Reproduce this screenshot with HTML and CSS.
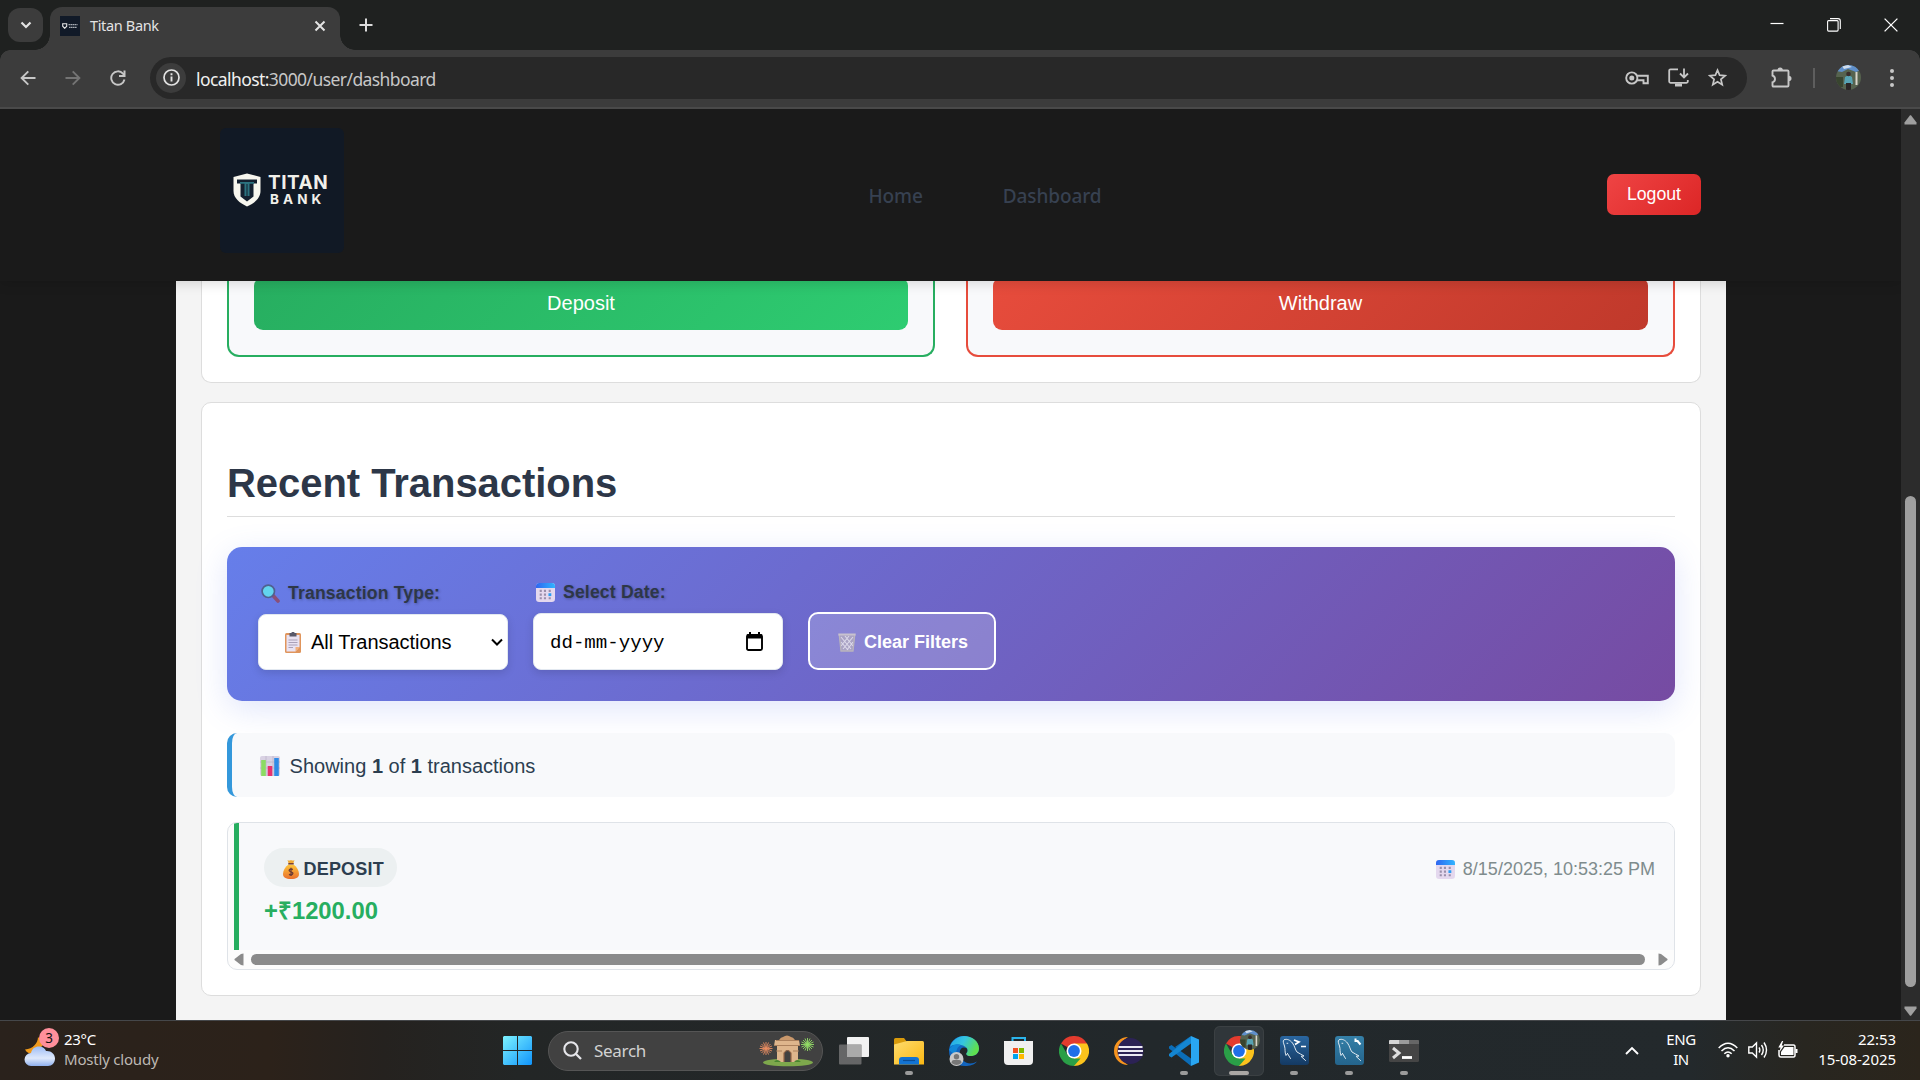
FILE: index.html
```html
<!DOCTYPE html>
<html lang="en">
<head>
<meta charset="utf-8">
<title>Titan Bank</title>
<link rel="stylesheet" href="styles.css">
</head>
<body>
<svg class="defs" width="0" height="0">
  <defs>
    <linearGradient id="calTop" x1="0" x2="1"><stop offset="0" stop-color="#2f66f0"/><stop offset="1" stop-color="#30b4ff"/></linearGradient>
    <linearGradient id="win" x1="0" y1="0" x2="1" y2="1"><stop offset="0" stop-color="#7df3ff"/><stop offset="1" stop-color="#1094fb"/></linearGradient>
    <linearGradient id="folder" x1="0" y1="0" x2="1" y2="1"><stop offset="0" stop-color="#ffdc6e"/><stop offset="1" stop-color="#fbb813"/></linearGradient>
    <linearGradient id="cloud" x1="0" y1="0" x2="0" y2="1"><stop offset="0" stop-color="#9dbcf5"/><stop offset=".6" stop-color="#dfe9fb"/><stop offset="1" stop-color="#8fb0ee"/></linearGradient>
    <linearGradient id="edgeA" x1="0" y1="0" x2="1" y2=".4"><stop offset="0" stop-color="#1fa3ea"/><stop offset=".5" stop-color="#35c5e0"/><stop offset="1" stop-color="#5fe04f"/></linearGradient>
    <linearGradient id="bag" x1="0" y1="0" x2="0" y2="1"><stop offset="0" stop-color="#ffc63a"/><stop offset="1" stop-color="#e8702e"/></linearGradient>
    <linearGradient id="sqlA" x1="0" y1="0" x2="0" y2="1"><stop offset="0" stop-color="#2a66a0"/><stop offset="1" stop-color="#143a63"/></linearGradient>
    <linearGradient id="sqlB" x1="0" y1="0" x2="0" y2="1"><stop offset="0" stop-color="#3580a8"/><stop offset="1" stop-color="#24648c"/></linearGradient>
    <symbol id="calendar" viewBox="0 0 18 18">
      <rect width="18" height="18" rx="3" fill="#e4d8ee"/><path d="M0 4.800V3a3 3 0 0 1 3-3h12a3 3 0 0 1 3 3v1.800z" fill="url(#calTop)"/>
      <g fill="#9a8fab"><path d="M3.500 6.500h2v2h-2zM7.500 6.500h2v2h-2zM12 6.500h2v2h-2zM3.500 10h2v2h-2zM7.500 10h2v2h-2zM3.500 13.500h2v2h-2zM7.500 13.500h2v2h-2zM12 13.500h2v2h-2z"/></g><path d="M11.800 9.700h2.700v2.700h-2.700z" fill="#2a9df4"/>
    </symbol>
    <symbol id="chrome" viewBox="0 0 30 30">
      <path d="M15 15 2 7.500A15 15 0 0 1 28 7.500z" fill="#e33b2e"/>
      <path d="M15 15V7.500h13A15 15 0 0 1 15 30z" fill="#fcc31c"/>
      <path d="M2 7.500 8.500 18.800 15 22.500h6.500L15 30A15 15 0 0 1 2 7.500z" fill="#2a9f47"/>
      <circle cx="15" cy="15" r="7.500" fill="#fff"/><circle cx="15" cy="15" r="5.900" fill="#1f6fe8"/>
    </symbol>
    <symbol id="avatar" viewBox="0 0 25 25">
      <clipPath id="round"><circle cx="12.500" cy="12.500" r="12.500"/></clipPath>
      <g clip-path="url(#round)"><path d="M0 0h25v25H0z" fill="#56634f"/><path d="M0 0h25v5l-5 2-8-3-6 3-6-1z" fill="#5f8fca"/><path d="M6 1l6-1 4 2-8 2z" fill="#cfdcec"/><path d="M19.500 7h2v13h-2z" fill="#d9d6cc"/><path d="M0 12h7v10H0z" fill="#38442f"/><path d="M9 12q3.500-3 7 0l1 7H8z" fill="#57a3b3"/><circle cx="12.500" cy="9" r="2.300" fill="#3a2d2b"/><path d="M10 18h5v7h-5z" fill="#2b2626"/></g>
    </symbol>
    <symbol id="dolphin" viewBox="0 0 28 28">
      <path d="M7.500 17.500 6 19.500C4.500 16 5.500 13 4.500 10S2.500 5 4 3.800C7 2.500 10 4 12.500 7c2.500 3.500 2.500 6.500 4.500 9 2 1.800 5 2.200 7 4l-3 .3 4.500 4.200M7 7.300h.8M7.500 17.500l3 5" fill="none" stroke="#dfe9f1" stroke-width="1" stroke-linecap="round" stroke-linejoin="round"/>
    </symbol>
  </defs>
</svg>

<div class="tabstrip">
  <div class="tab-search"><svg width="12" height="8" viewBox="0 0 12 8"><path d="M1.500 1.500 6 6l4.500-4.500" fill="none" stroke="#e3e3e3" stroke-width="2.200"/></svg></div>
  <div class="tab">
    <div class="favicon"><svg width="16" height="6" viewBox="0 0 16 6"><path d="M.7.700h4v2.500L2.700 5.300.7 3.200z" fill="none" stroke="#e8e8e8" stroke-width="1.100"/><path d="M6.500 1.700h9M7 4.300h8" stroke="#a8adb4" stroke-width="1.300" stroke-dasharray="1.600 .4"/></svg></div>
    <span class="tab-title">Titan Bank</span>
    <svg class="tab-close" width="12" height="12" viewBox="0 0 12 12"><path d="m1.500 1.500 9 9m0-9-9 9" stroke="#e3e3e3" stroke-width="2"/></svg>
  </div>
  <svg class="new-tab" width="14" height="14" viewBox="0 0 14 14"><path d="M7 .5v13M.5 7h13" stroke="#dcdcdc" stroke-width="2"/></svg>
  <div class="window-buttons">
    <svg width="14" height="14" viewBox="0 0 14 14"><path d="M.5 5.500h13" stroke="#fff" stroke-width="1.200"/></svg>
    <svg width="14" height="14" viewBox="0 0 14 14"><rect x=".6" y="2.600" width="10.500" height="10.500" rx="1" fill="none" stroke="#fff" stroke-width="1.100"/><path d="M3 .6h8a2.300 2.300 0 0 1 2.300 2.300V11" fill="none" stroke="#fff" stroke-width="1.100"/></svg>
    <svg width="14" height="14" viewBox="0 0 14 14"><path d="m.6.600 12.800 12.800M13.400.600.6 13.400" stroke="#fff" stroke-width="1.300"/></svg>
  </div>
</div>

<div class="toolbar">
  <div class="nav-icons">
    <svg width="16" height="16" viewBox="0 0 16 16"><path d="M15.500 8H2M8.300 1.300 1.600 8l6.700 6.700" fill="none" stroke="#c7c7c7" stroke-width="1.900"/></svg>
    <svg width="16" height="16" viewBox="0 0 16 16"><path d="M.5 8H14M7.700 1.300 14.400 8l-6.700 6.700" fill="none" stroke="#747474" stroke-width="1.900"/></svg>
    <svg width="16" height="16" viewBox="0 0 16 16"><path d="M14.500 9.500A6.700 6.700 0 1 1 13 3.600l1 1.200" fill="none" stroke="#c7c7c7" stroke-width="1.900"/><path d="M15.500.500V7H9V5.100h4.500V.500z" fill="#c7c7c7"/></svg>
  </div>
  <div class="omnibox">
    <div class="site-info"><svg width="17" height="17" viewBox="0 0 17 17"><circle cx="8.500" cy="8.500" r="7.500" fill="none" stroke="#e3e3e3" stroke-width="1.700"/><path d="M8.500 7.500v5M8.500 4.300v1.900" stroke="#e3e3e3" stroke-width="1.900"/></svg></div>
    <span class="url"><b>localhost:</b>3000/user/dashboard</span>
    <div class="omni-icons">
      <svg width="24" height="14" viewBox="0 0 24 14"><circle cx="6.800" cy="7" r="5.600" fill="none" stroke="#c7c7c7" stroke-width="1.900"/><circle cx="6.800" cy="7" r="2.500" fill="#c7c7c7"/><path d="M12 4.800h10.800v7.500h-4.300V9.300H12" fill="none" stroke="#c7c7c7" stroke-width="1.900"/></svg>
      <svg width="21" height="19" viewBox="0 0 21 19"><path d="M10 1.300H2.500Q1.200 1.300 1.200 2.600v11q0 1.200 1.300 1.200h16q1.300 0 1.300-1.200V12" fill="none" stroke="#c7c7c7" stroke-width="1.800"/><path d="M7 15.500h7v3H7z" fill="#c7c7c7"/><path d="M16 .5v8.500M12 5.500l4 4 4-4" fill="none" stroke="#c7c7c7" stroke-width="1.800"/></svg>
      <svg width="19" height="19" viewBox="0 0 19 19"><path d="m9.500 2.200 2.100 5 5.500.5-4.200 3.600 1.300 5.300-4.700-2.900-4.700 2.900 1.300-5.300L1.900 7.700l5.500-.5z" fill="none" stroke="#c7c7c7" stroke-width="1.700"/></svg>
    </div>
  </div>
  <div class="tool-icons">
    <svg width="21" height="21" viewBox="0 0 21 21"><path d="M2.500 3.500h14q1 0 1 1v14q0 1-1 1h-14q-1 0-1-1V15.300q2.500-.8 2.500-3.300T1.500 8.500V4.500q0-1 1-1z" fill="none" stroke="#c7c7c7" stroke-width="1.900"/><path d="M6.500 3.500a2.700 3 0 0 1 5.400 0zM17.500 8.700a3 2.700 0 0 1 0 5.400z" fill="#c7c7c7"/></svg>
    <i class="divider"></i>
    <svg width="25" height="25"><use href="#avatar"/></svg>
    <svg width="4" height="18" viewBox="0 0 4 18"><g fill="#c7c7c7"><circle cx="2" cy="2" r="2"/><circle cx="2" cy="9" r="2"/><circle cx="2" cy="16" r="2"/></g></svg>
  </div>
</div>

<div class="viewport">
  <div class="page">
    <header class="site-header">
      <div class="logo">
        <svg width="28" height="34" viewBox="0 0 28 34"><path d="M14 .5 27.500 4v14c0 7-6 12-13.500 15.500C6.500 30 .5 25 .5 18V4z" fill="#f7f6ee"/><path d="M4 6.500h20v4h-3.500v13L14 28.500 7.500 23.500v-13H4z" fill="#142030"/><path d="M7 9h14v1.800h-4.500V23h-2V11h-1v12h-2V10.800H7z" fill="#2b7280"/></svg>
        <div class="logo-text"><div class="titan">TITAN</div><div class="bank">BANK</div></div>
      </div>
      <nav class="site-nav"><a>Home</a><a>Dashboard</a></nav>
      <button class="logout">Logout</button>
    </header>
    <main class="dashboard">
      <section class="card actions">
        <div class="action deposit"><button>Deposit</button></div>
        <div class="action withdraw"><button>Withdraw</button></div>
      </section>
      <section class="card transactions">
        <h2>Recent Transactions</h2>
        <div class="filters">
          <div class="field type">
            <div class="label"><svg width="19" height="19" viewBox="0 0 19 19"><path d="m12 11.500 5 5.500" stroke="#8a4f78" stroke-width="3.600" stroke-linecap="round"/><circle cx="7.300" cy="7.300" r="6.200" fill="#62d4ee" stroke="#50618f" stroke-width="1.700"/></svg>Transaction Type:</div>
            <div class="control select"><svg width="16" height="21" viewBox="0 0 16 21"><rect y="1" width="16" height="20" rx="1.500" fill="#e0955c"/><path d="M1.500 3h13v12l-4 4.500h-9z" fill="#e9e2f2"/><path d="M14.500 15 10.500 19.500V15z" fill="#f3b07c"/><path d="M4.500 1h2a1.500 1.500 0 0 1 3 0h2v3.500h-7z" fill="#59596a"/><path d="M3.500 8h9M3.500 10.500h9M3.500 13h9M3.500 15.500H8" stroke="#aaa0b8"/></svg><span>All Transactions</span><svg class="caret" width="12" height="8" viewBox="0 0 12 8"><path d="M1 1.500 6 6.500l5-5" fill="none" stroke="#000" stroke-width="2"/></svg></div>
          </div>
          <div class="field">
            <div class="label"><svg width="19" height="19"><use href="#calendar"/></svg>Select Date:</div>
            <div class="control date"><span>dd-mm-yyyy</span><svg width="17" height="19" viewBox="0 0 17 19"><rect x="1" y="3" width="15" height="15" rx="1.500" fill="none" stroke="#000" stroke-width="1.900"/><path d="M1 2.300h15V6.500H1zM3 0h2v3H3zM12 0h2v3h-2z"/></svg></div>
          </div>
          <button class="clear"><svg width="18" height="19" viewBox="0 0 18 19"><path d="M1 2h16l-2 16H3z" fill="#a9a2c4"/><path d="m3 4 10 12M7 3l8 10M3 9l7 8M15 4 5 16M11 3 3 13M15 9l-6 8" stroke="#dcd9ea" stroke-width="1.100"/><path d="M1.300 2 3 18h12l1.700-16" fill="none" stroke="#b9b4bd" stroke-width="1.300"/><path d="M.3 1.500h17.400" stroke="#c8c2cf" stroke-width="2"/></svg>Clear Filters</button>
        </div>
        <div class="summary"><svg width="20" height="20" viewBox="0 0 20 20"><rect width="20" height="20" rx="2" fill="#d9d2e3"/><path d="M0 6h20M0 12h20M6 0v20M13 0v20" stroke="#bdb4c9" stroke-width=".8"/><path d="M1.200 4h4.600v16H1.200z" fill="#8cdb63"/><path d="M7.700 10h4.600v10H7.700z" fill="#e8316f"/><path d="M14.200 2h4.600v18h-4.600z" fill="#2f8be6"/></svg><span>Showing <b>1</b> of <b>1</b> transactions</span></div>
        <div class="list">
          <div class="item">
            <div class="item-main">
              <div class="pill"><svg width="16" height="20" viewBox="0 0 16 20"><path d="M5.500 5.500h5C14 8 16 11.500 16 15c0 3.500-2.500 5-8 5s-8-1.500-8-5c0-3.500 2-7 5.500-9.500z" fill="url(#bag)"/><path d="M4.500 1q1.500 1 3.500 0 2 1 3.500 0l-1.200 3.500H5.700z" fill="#f0a934"/><path d="M5.300 4.700h5.400" stroke="#7b4032" stroke-width="1.500"/><path d="M9.800 10.600q-1.800-1.200-3.200 0t1.400 2.200 1.400 2.400-3.400.2M8 8.800v8.200" fill="none" stroke="#6b3b35" stroke-width="1.300"/></svg>DEPOSIT</div>
              <div class="amount">+₹1200.00</div>
            </div>
            <div class="when"><svg width="19" height="19"><use href="#calendar"/></svg>8/15/2025, 10:53:25 PM</div>
          </div>
          <div class="hscroll">
            <svg width="10" height="13" viewBox="0 0 10 13"><path d="M9.500.500v12L7 12 .5 7V6L7 1z" fill="#8b8b8b"/></svg>
            <i class="hthumb"></i>
            <svg width="10" height="13" viewBox="0 0 10 13"><path d="M.5.500v12L3 12 9.500 7V6L3 1z" fill="#8b8b8b"/></svg>
          </div>
        </div>
      </section>
    </main>
  </div>
  <div class="vscroll">
    <svg width="13" height="10" viewBox="0 0 13 10"><path d="M6 .3h1L12.500 7.500V9.500H.5V7.500z" fill="#9f9f9f"/></svg>
    <i class="vthumb"></i>
    <svg width="13" height="10" viewBox="0 0 13 10"><path d="M6 9.700h1L12.500 2.500V.500H.5V2.500z" fill="#9f9f9f"/></svg>
  </div>
</div>

<div class="taskbar">
  <div class="weather">
    <div class="weather-icon"><svg width="34" height="38" viewBox="0 0 34 38"><path d="M14 7c0 6-5 12-13 12.500 2 4 6 5 11 4l8-10z" fill="#f09a1c"/><path d="M7 36a6.500 6.500 0 0 1 0-13c1-5 5-7 9-6.500 3 .3 5 2 6 4.500 5-.5 9 3 9 7.500S28 36 24 36z" fill="url(#cloud)"/></svg><span class="badge">3</span></div>
    <div class="weather-text"><div>23°C</div><div class="dim">Mostly cloudy</div></div>
  </div>
  <div class="apps">
    <svg class="start" width="29" height="29" viewBox="0 0 29 29"><path d="M1 0h13v14H0V1zM15 0h13l1 1v13H15zM0 15h14v14H1l-1-1zM15 15h14v13l-1 1H15z" fill="url(#win)"/></svg>
    <div class="search">
      <svg width="19" height="19" viewBox="0 0 19 19"><circle cx="8" cy="8" r="6.700" fill="none" stroke="#e6e6ea" stroke-width="2.100"/><path d="m13 13 5 5" stroke="#e6e6ea" stroke-width="2.300"/></svg>
      <span>Search</span>
      <svg width="56" height="32" viewBox="0 0 56 32"><ellipse cx="29" cy="27.500" rx="25" ry="3.800" fill="#7ea84c"/><path d="M16 5h24l1 6h-2v16h-7V18q-3.500-6-7 0v9h-7V11h-3z" fill="#deb58c"/><path d="M20 5q2-3 4-3 4-3 8 0 2 0 4 3z" fill="#c9986c"/><path d="M15 10.500h26M17 16h6M34 16h6M17 5.500h23" stroke="#a67a58" stroke-width=".9"/><path d="M25 27v-9q3.500-5 7 0v9z" fill="#414141"/><path d="M25 27v-9q3.500-5 7 0v9" fill="none" stroke="#946547" stroke-width="1.200"/><path d="M15 27q3-4 7 0zM35 27q3-4 7 0z" fill="#48862f"/><g fill="none" stroke-width=".9"><path d="M7 7v13M.5 13.500h13M2.500 9l9 9m0-9-9 9M4.500 7.500l5 12m0-12-5 12M1 11l12 5m0-5L1 16" stroke="#e98d62"/><path d="M48.500 3v13M42 9.500h13M44 5l9 9m0-9-9 9M46 3.500l5 12m0-12-5 12M42.500 7l12 5m0-5-12 5" stroke="#93dc66"/></g></svg>
    </div>
    <div class="slots">
      <div class="slot"><svg width="30" height="30" viewBox="0 0 30 30"><rect x="8" y="1" width="22" height="20" rx="1" fill="#f2f2f2"/><rect y="8.500" width="22.500" height="20" rx="1" fill="#777" fill-opacity=".8"/><path d="M8 8.500h14.500V21H8z" fill="#aaa"/></svg></div>
      <div class="slot run"><svg width="30" height="30" viewBox="0 0 30 30"><path d="M0 3.500Q0 2 1.500 2H10l3 4h15v6H0z" fill="#d99a0b"/><path d="M0 8.500 13 5h15.500Q30 5 30 6.500v22H0z" fill="url(#folder)"/><path d="M5 28.500V24q0-3 3-3h14q3 0 3 3v4.500z" fill="#1374d3"/><path d="M9 24.500h12" stroke="#0b4d95" stroke-width="1.200"/></svg></div>
      <div class="slot"><svg width="30" height="30" viewBox="0 0 30 30"><path d="M0 15C0 6 7 0 15 0s15 6 15 12.500c0 5-4 7.500-8.500 7.500-4 0-5-2-3.500-3.500 1.500-2 .5-5-3-5-5 0-6 8-1 13 4 3.500 9 4 14 1-3 3.500-7 4.500-12 4.500C7 30 0 24 0 15z" fill="#1264bd"/><path d="M1 11C3 4 9 0 15 0c8 0 15 5 15 12.500 0 5-4 7.500-8.500 7.500-4 0-5-2-3.500-3.500 1.500-2 .5-5.500-4-7C9 8 4 8 1 11z" fill="url(#edgeA)"/><path d="M0 14c2-5 8-7 12-5-4 2-6 7-4 12z" fill="#1187d8"/><circle cx="7.500" cy="23" r="7" fill="#c9c9c9"/><circle cx="7.500" cy="20.700" r="2.700" fill="#777"/><path d="M2.500 27q0-3 2.500-3h5q2.500 0 2.500 3-5 4-10 0z" fill="#777"/></svg></div>
      <div class="slot"><svg width="30" height="30" viewBox="0 0 30 30"><path d="M8.500 6V2h12.500v4" fill="none" stroke="#2bb4ec" stroke-width="2"/><path d="M0 5h29v20q0 4-4 4H4q-4 0-4-4z" fill="#f0f0f0"/><path d="M9 12h5v5H9z" fill="#f25022"/><path d="M15 12h5v5h-5z" fill="#7fba00"/><path d="M9 18h5v5H9z" fill="#00a4ef"/><path d="M15 18h5v5h-5z" fill="#ffb900"/></svg></div>
      <div class="slot"><svg width="30" height="30"><use href="#chrome"/></svg></div>
      <div class="slot"><svg width="30" height="30" viewBox="0 0 30 30"><path d="M14 1A14 14 0 0 0 14 29 16 16 0 0 1 14 1z" fill="#f7941e"/><circle cx="16.500" cy="15" r="13" fill="#2c2255"/><path d="M4.500 11h24M4 15h25M4.500 19h24" stroke="#eceaf3" stroke-width="2"/></svg></div>
      <div class="slot run"><svg width="30" height="30" viewBox="0 0 30 30"><path d="M22 0 8 13 2.500 9 0 10.500v2L22 30v-7.500L6 11z" fill="#0b6db8"/><path d="M22 0v7.500L2.500 21.500 0 20v-2z" fill="#1486d2"/><path d="m22 0 8 3.500v23L22 30z" fill="#29a6f2"/></svg></div>
      <div class="slot run active"><svg width="30" height="30"><use href="#chrome"/></svg><svg class="mini" width="20" height="20" viewBox="0 0 25 25"><use href="#avatar" width="25" height="25"/></svg></div>
      <div class="slot run"><svg width="29" height="29" viewBox="0 0 29 29"><rect width="29" height="29" rx="3" fill="url(#sqlA)"/><use href="#dolphin" width="28" height="28"/><path d="m14 4 5 2-4 2.500M21 10.500h5" fill="none" stroke="#fff" stroke-width="1.700"/></svg></div>
      <div class="slot run"><svg width="29" height="29" viewBox="0 0 29 29"><rect width="29" height="29" rx="3" fill="url(#sqlB)"/><use href="#dolphin" width="28" height="28"/><path d="m22.500 5 3 3.500M20.500 2.500v2.500h3" fill="none" stroke="#fff" stroke-width="2"/></svg></div>
      <div class="slot run"><svg width="30" height="30" viewBox="0 0 30 30"><rect y="4" width="30" height="22" rx="1.500" fill="#454545"/><path d="M0 8V5q0-1 1-1h9v4z" fill="#d4d4d4"/><path d="M10 4h10v4H10z" fill="#9b9b9b"/><path d="M20 4h9q1 0 1 1v3H20z" fill="#666"/><path d="m4 12 6 5-6 5" fill="none" stroke="#ddd" stroke-width="3"/><path d="M13 21.500h10" stroke="#fff" stroke-width="2.800"/></svg></div>
    </div>
  </div>
  <div class="tray">
    <svg width="14" height="9" viewBox="0 0 14 9"><path d="m1 8 6-6 6 6" fill="none" stroke="#fff" stroke-width="1.900"/></svg>
    <div class="lang"><div>ENG</div><div>IN</div></div>
    <div class="status">
      <svg width="20" height="16" viewBox="0 0 20 16"><g fill="none" stroke="#fff" stroke-width="1.500"><path d="M.7 6q9.300-9.500 18.600 0M3.500 9q6.500-6.500 13 0M6.300 11.800q3.700-3.700 7.400 0"/></g><circle cx="10" cy="13.800" r="1.700" fill="#fff"/></svg>
      <svg width="20" height="18" viewBox="0 0 20 18"><g fill="none" stroke="#fff" stroke-width="1.400"><path d="M.8 6h3.500L8.500 2v14l-4.200-4H.8z"/><path d="M11 6.500q1.700 2.500 0 5M13.500 4q3.500 5 0 10M16 1.500q5 7.500 0 15"/></g></svg>
      <svg width="20" height="18" viewBox="0 0 20 18"><path d="M6 4h9.500Q17 4 17 6v8q0 2-1.500 2H3q-2 0-2-2V9" fill="none" stroke="#fff" stroke-width="1.500"/><path d="M6.500 6h9v8H3v-3z" fill="#fff"/><path d="M17.500 8h2v4h-2z" fill="#fff"/><path d="M4 0 .3 6.500h2.200L1.500 11 6 4.500H3.700L5.200 0z" fill="#fff"/></svg>
    </div>
    <div class="clock"><div>22:53</div><div>15-08-2025</div></div>
  </div>
</div>
</body>
</html>
```
FILE: styles.css
```css
* { box-sizing: border-box; }
body {
  margin: 0;
  width: 1920px;
  height: 1080px;
  overflow: hidden;
  display: flex;
  flex-direction: column;
  background: #3c3c3c;
  font-family: "Liberation Sans", Arial, sans-serif;
}
svg { display: block; flex: none; }
button { border: 0; font-family: inherit; }
.defs { position: absolute; }

/* Browser tab strip */
.tabstrip {
  height: 50px;
  flex: none;
  display: flex;
  align-items: center;
  padding-left: 8px;
  background: #1f2120;
  font-family: "Noto Sans", sans-serif;
}
.tab-search {
  width: 35px;
  height: 34px;
  border-radius: 12px;
  background: #3c3c3c;
  display: grid;
  place-items: center;
}
.tab {
  position: relative;
  width: 290px;
  height: 43px;
  margin: 7px 0 0 7px;
  padding: 0 14px 6px 10px;
  border-radius: 12px 12px 0 0;
  background: #3c3c3c;
  display: flex;
  align-items: center;
}
.tab::before, .tab::after {
  content: "";
  position: absolute;
  bottom: 0;
  width: 15px;
  height: 15px;
}
.tab::before { left: -15px; background: radial-gradient(circle at 0 0, transparent 14.5px, #3c3c3c 15px); }
.tab::after { right: -15px; background: radial-gradient(circle at 100% 0, transparent 14.5px, #3c3c3c 15px); }
.favicon { width: 20px; height: 20px; background: #111a28; display: grid; place-items: center; }
.tab-title { margin: 0 0 2px 10px; font-size: 14.5px; letter-spacing: -0.35px; color: #e3e3e3; }
.tab-close { margin-left: auto; }
.new-tab { margin-left: 19px; }
.window-buttons { margin-left: auto; display: flex; gap: 43px; padding-right: 22px; }

/* Browser toolbar */
.toolbar {
  height: 59px;
  flex: none;
  display: flex;
  align-items: center;
  padding: 0 26px 2px 20px;
  border-bottom: 2px solid #4a4a4a;
  background: radial-gradient(circle at 10px 10px, #3c3c3c 9.5px, #1f2120 10px) 0 0 / 10px 10px no-repeat,
    radial-gradient(circle at 0 10px, #3c3c3c 9.5px, #1f2120 10px) 100% 0 / 10px 10px no-repeat, #3c3c3c;
}
.nav-icons { display: flex; gap: 29px; }
.omnibox {
  width: 1597px;
  height: 42px;
  margin-left: 24px;
  padding: 0 20px 0 6px;
  border-radius: 21px;
  background: #282828;
  display: flex;
  align-items: center;
}
.site-info { width: 30px; height: 30px; border-radius: 50%; background: #3c3c3c; display: grid; place-items: center; }
.url { margin: 2px 0 0 10px; font: 17.5px "Noto Sans", sans-serif; letter-spacing: -0.58px; color: #c7c7c7; }
.url b { font-weight: 400; color: #f0f0f0; }
.omni-icons { margin-left: auto; display: flex; align-items: center; gap: 19px; }
.tool-icons { margin-left: auto; display: flex; align-items: center; gap: 21px; }
.tool-icons svg:last-child { margin-left: 8px; }
.divider { width: 2px; height: 20px; background: #5e5e5e; }

/* Web page */
.viewport { height: 911px; flex: none; display: flex; background: #1a1a1a; }
.page { flex: 1; display: flex; flex-direction: column; overflow: hidden; }
.site-header {
  height: 172px;
  flex: none;
  position: relative;
  z-index: 1;
  display: grid;
  grid-template-columns: 1fr auto 1fr;
  align-items: center;
  padding: 0 200px 0 220px;
  background: #1a1a1a;
  box-shadow: 0 2px 12px rgba(0, 0, 0, .15);
}
.logo {
  width: 124px;
  height: 125px;
  margin-bottom: 9px;
  padding: 0 0 1px 13px;
  border-radius: 6px;
  background: #111925;
  display: flex;
  align-items: center;
  gap: 7px;
  color: #f1f0ea;
  font-family: Inter, sans-serif;
  font-weight: 700;
}
.logo-text { width: 60px; }
.titan { font-size: 19px; line-height: 18px; letter-spacing: .5px; }
.bank { padding-left: 2px; font-size: 13.5px; line-height: 15px; letter-spacing: 4.1px; font-weight: 700; }
.site-nav { display: flex; gap: 80px; padding: 2px 0 0 49px; font: 500 19px "Noto Sans", sans-serif; letter-spacing: -.1px; color: #374151; }
.logout {
  justify-self: end;
  width: 94px;
  height: 41px;
  margin-bottom: 2px;
  border-radius: 7px;
  background: linear-gradient(135deg, #ef4444, #dc2626);
  color: #fff;
  font-size: 17.7px;
}
.dashboard {
  flex: 1;
  width: 1550px;
  margin-left: 176px;
  padding: 0 25px;
  background: #f4f4f4;
  display: flex;
  flex-direction: column;
}
.card { background: #fff; border: 1px solid #ddd; border-radius: 10px; padding: 25px; }
.actions {
  height: 122px;
  margin: -20px 0 19px;
  display: grid;
  grid-template-columns: 708px 1fr;
  gap: 31px;
  border-top: 0;
  border-radius: 0 0 10px 10px;
  padding-top: 0;
}
.action { border: 2px solid; border-top: 0; border-radius: 0 0 12px 12px; background: #f8f9fb; padding: 16px 25px 25px; }
.action button { width: 100%; height: 53px; border-radius: 9px; color: #fff; font-size: 20px; }
.deposit { border-color: #27ae60; }
.deposit button { background: linear-gradient(135deg, #27ae60, #2ecc71); }
.withdraw { border-color: #e74c3c; }
.withdraw button { background: linear-gradient(135deg, #e74c3c, #c0392b); }

.transactions { height: 594px; }
h2 {
  margin: 32px 0 30px;
  height: 57px;
  border-bottom: 1px solid #ddd;
  font-size: 40px;
  line-height: 46px;
  letter-spacing: -.05px;
  color: #2d3748;
}
.filters {
  height: 154px;
  padding: 0 31px 31px;
  border-radius: 15px;
  background: linear-gradient(135deg, #667eea, #764ba2);
  box-shadow: 0 8px 32px rgba(102, 126, 234, .2);
  display: flex;
  align-items: flex-end;
  gap: 25px;
}
.label {
  height: 21px;
  margin-bottom: 10px;
  display: flex;
  align-items: center;
  gap: 8px;
  padding-left: 3px;
  font-size: 17.6px;
  letter-spacing: .17px;
  font-weight: 700;
  color: #2d3748;
  text-shadow: 1px 1px 3px rgba(0, 0, 0, .3);
}
.control {
  width: 250px;
  height: 57px;
  border: 1px solid #e2e8f0;
  border-radius: 8px;
  background: #fff;
  box-shadow: 0 3px 8px rgba(0, 0, 0, .13);
  display: flex;
  align-items: center;
  font-size: 20px;
  color: #000;
}
.select { height: 56px; padding: 0 4px 0 26px; gap: 10px; letter-spacing: -.04px; }
.caret { margin-left: auto; }
.date { padding: 0 19px 1px 16px; justify-content: space-between; font-family: "Liberation Mono", monospace; font-size: 19.1px; }
.date span { padding-top: 3px; }
.clear {
  width: 188px;
  height: 58px;
  padding: 2px 0 0 2px;
  border: 2px solid #fff;
  border-radius: 10px;
  background: rgba(255, 255, 255, .2);
  color: #fff;
  font-size: 18px;
  font-weight: 700;
  display: flex;
  align-items: center;
  justify-content: center;
  gap: 8px;
}
.summary {
  height: 64px;
  margin: 32px 0 25px;
  padding: 2px 28px 0;
  border-left: 5px solid #3498db;
  border-radius: 10px;
  background: #f8f9fb;
  display: flex;
  align-items: center;
  gap: 9.6px;
  font-size: 20px;
  color: #2c3e50;
}
.list {
  height: 148px;
  border: 1px solid #dfe3e8;
  border-radius: 10px;
  overflow: hidden;
  padding-left: 6px;
  background: #fcfcfc;
}
.item {
  height: 127px;
  border-left: 5px solid #27ae60;
  background: #f8f9fb;
  display: flex;
  justify-content: space-between;
  padding: 25px 19px 0 25px;
}
.pill {
  width: 133px;
  height: 39px;
  border-radius: 20px;
  background: #ecf0f1;
  display: flex;
  align-items: center;
  padding: 3px 0 0 19px;
  gap: 4.5px;
  font-size: 18px;
  letter-spacing: .2px;
  font-weight: 700;
  color: #2c3e50;
}
.amount { margin-top: 10px; font-size: 23.8px; line-height: 28px; font-weight: 700; color: #27ae60; }
.when { display: flex; align-items: center; gap: 8px; height: 42px; font-size: 18px; color: #7f8c8d; }
.hscroll { height: 19px; display: flex; align-items: center; padding: 0 6px 1px 0; }
.hthumb { width: 1394px; height: 11px; margin: 0 auto 0 7px; border-radius: 6px; background: #8b8b8b; }
.vscroll {
  width: 19px;
  background: #2c2c2c;
  display: flex;
  flex-direction: column;
  align-items: center;
  padding: 6px 0 4px;
}
.vthumb { width: 11px; height: 491px; margin: 371px 0 auto; border-radius: 6px; background: #9f9f9f; }

/* Taskbar */
.taskbar {
  height: 60px;
  flex: none;
  display: flex;
  align-items: center;
  border-top: 1px solid #45474a;
  background: linear-gradient(90deg, #2a221c 0, #2c221a 14%, #25221f 20%, #232626 27%, #22282b 60%, #23292c 88%, #282620 94%, #2b251c);
  color: #fff;
  font: 15px/20px "Noto Sans", sans-serif;
}
.weather { width: 503px; display: flex; align-items: center; padding: 0 0 4px 24px; }
.weather-icon { position: relative; }
.badge {
  position: absolute;
  left: 15px;
  top: -2px;
  width: 20px;
  height: 20px;
  border-radius: 50%;
  background: #ff8f9b;
  color: #111;
  text-align: center;
  font-size: 13.5px;
}
.weather-text { margin: 0 0 0 6px; letter-spacing: -.3px; }
.dim { color: #bdb8b3; letter-spacing: -.2px; }
.apps { display: flex; align-items: center; }
.search {
  width: 275px;
  height: 40px;
  margin: 0 6px 0 16px;
  border-radius: 20px;
  border: 1px solid #555;
  background: #414141;
  display: flex;
  align-items: center;
  padding: 0 7px 0 14px;
}
.search span { flex: 1; margin-left: 12px; font-size: 17px; letter-spacing: -.3px; color: #d2d2d2; }
.slots { display: flex; gap: 5px; }
.slot { position: relative; width: 50px; height: 50px; border-radius: 6px; display: grid; place-items: center; }
.run::after { content: ""; position: absolute; left: 21px; bottom: 1px; width: 8px; height: 4px; border-radius: 2px; background: #9b9b9b; }
.active { background: #30363a; box-shadow: inset 0 0 0 1px #3b4043; }
.active::after { left: 15px; width: 20px; background: #aaa7a4; }
.mini { position: absolute; left: 26px; top: 4px; }
.tray { margin-left: auto; display: flex; align-items: center; padding-right: 24px; text-align: center; }
.lang { width: 40px; margin: 0 0 3px 22px; letter-spacing: -.4px; }
.status { display: flex; align-items: center; gap: 10px; margin: 0 0 2px 17px; }
.clock { width: 91px; margin: 0 0 4px 7px; text-align: right; letter-spacing: -.05px; }
```
